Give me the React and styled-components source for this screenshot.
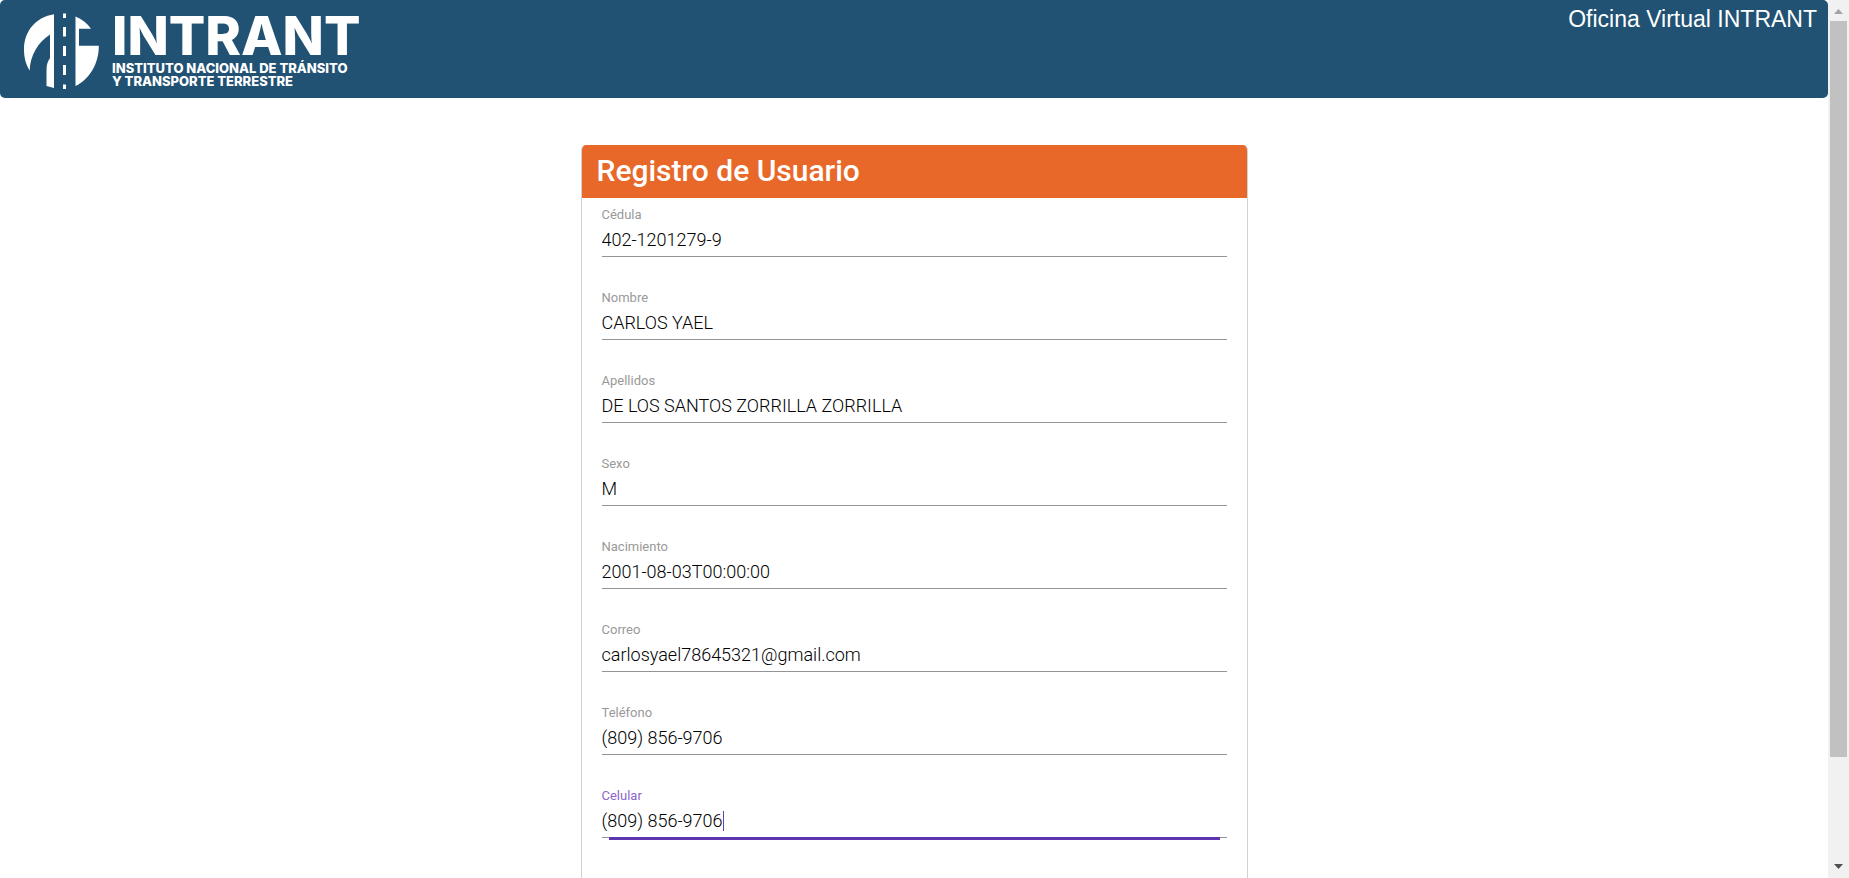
import React from "react";
import styled, { createGlobalStyle } from "styled-components";

const GlobalStyle = createGlobalStyle`
  *, *::before, *::after { box-sizing: border-box; }
  body { margin: 0; background: #fff; font-family: Roboto, "Liberation Sans", sans-serif; color: #212121; }
`;

const Shell = styled.div`
  display: flex;
  height: 100vh;
`;

const Page = styled.div`
  flex: 1;
  min-width: 0;
  overflow-y: auto;
  scrollbar-width: none;
`;

const TopBar = styled.header`
  display: flex;
  justify-content: space-between;
  align-items: flex-start;
  min-height: 98px;
  padding: 0 11px 0 20px;
  border-radius: 5px;
  background: #215273;
  color: #fff;
`;

const Brand = styled.a`
  display: flex;
  gap: 10px;
  padding-top: 10px;
  color: inherit;
  text-decoration: none;
  font-family: Inter, "Liberation Sans", sans-serif;
  font-weight: 800;
`;

const BrandText = styled.span`
  display: flex;
  flex-direction: column;
  white-space: nowrap;
`;

const BrandName = styled.span`
  font-size: 54px;
  line-height: 52px;
`;

const BrandLine = styled.span`
  font-size: 13px;
  line-height: 13px;
`;

const OfficeName = styled.span`
  font-family: "Liberation Sans", sans-serif;
  font-size: 23px;
  line-height: 38px;
`;

const Main = styled.main`
  display: flex;
  justify-content: center;
  padding: 47px 15px;
`;

const Card = styled.section`
  width: 100%;
  max-width: 667px;
  border: 1px solid #d2d2d2;
  border-top: 0;
  border-radius: 5px;
  overflow: hidden;
`;

const CardTitle = styled.h1`
  margin: 0;
  padding: 3px 15px 5px;
  background: #e86829;
  color: #fff;
  font-size: 30px;
  line-height: 45px;
  font-weight: 500;
`;

const Form = styled.form`
  display: flex;
  flex-direction: column;
  gap: 33px;
  padding: 9px 20px 110px;
`;

const Field = styled.div`
  position: relative;
  display: flex;
  flex-direction: column;
  height: 50px;
  border-bottom: 1px solid #949494;
`;

const Label = styled.label`
  font-size: 13px;
  line-height: 16px;
  color: ${({ $active }) => ($active ? "#8c66c9" : "#999")};
`;

const InputRow = styled.div`
  display: flex;
  align-items: center;
  padding-top: 7px;
`;

const Input = styled.input`
  flex: ${({ $active }) => ($active ? "none" : "1")};
  field-sizing: ${({ $active }) => ($active ? "content" : "fixed")};
  min-width: 0;
  padding: 0;
  border: 0;
  outline: 0;
  background: transparent;
  color: #000;
  font-family: inherit;
  font-size: 18px;
  font-weight: 300;
  line-height: 20px;
  height: 20px;
`;

const Caret = styled.span`
  width: 1px;
  height: 20px;
  background: #673ab7;
`;

const Ripple = styled.span`
  position: absolute;
  left: 7px;
  right: 7px;
  bottom: -3px;
  height: 3px;
  background: #5e35b1;
`;

const ScrollTrack = styled.div`
  display: flex;
  flex-direction: column;
  align-items: center;
  width: 21px;
  background: #f1f1f1;
`;

const ScrollArrow = styled.svg`
  display: block;
  flex: none;
  width: 21px;
  height: 21px;
  fill: ${({ $dim }) => ($dim ? "#a3a3a3" : "#505050")};
`;

const ScrollLane = styled.div`
  flex: 1;
  width: 17px;
`;

const ScrollThumb = styled.div`
  height: 88%;
  background: #c1c1c1;
`;

const fields = [
  { id: "cedula", label: "Cédula", value: "402-1201279-9" },
  { id: "nombre", label: "Nombre", value: "CARLOS YAEL" },
  { id: "apellidos", label: "Apellidos", value: "DE LOS SANTOS ZORRILLA ZORRILLA" },
  { id: "sexo", label: "Sexo", value: "M" },
  { id: "nacimiento", label: "Nacimiento", value: "2001-08-03T00:00:00" },
  { id: "correo", label: "Correo", value: "carlosyael78645321@gmail.com" },
  { id: "telefono", label: "Teléfono", value: "(809) 856-9706" },
  { id: "celular", label: "Celular", value: "(809) 856-9706", active: true },
];

function LogoMark() {
  return (
    <svg width="82" height="80" viewBox="20 10 82 80" fill="#fff" aria-hidden="true">
      <path d="M54 14.3C36 17 24 31 24 49.500C24 57.500 26 65 29.700 70.500C30.200 55 38 42.500 50 34.500V58C47.500 61.500 46.500 65 46.500 70V86L54 88Z" />
      <path d="M75.500 16.500C82 19 87 23 91 28.700H79V45.700H98.800C99 63 90 79 75.500 86Z" />
      <path d="M63 13.500H66V18H63ZM63 27H66V36.500H63ZM63 46H66V56H63ZM63 65H66V75H63ZM63 84.500H66V89H63Z" />
    </svg>
  );
}

function TextField({ id, label, value, active }) {
  return (
    <Field>
      <Label htmlFor={id} $active={active}>{label}</Label>
      <InputRow>
        <Input id={id} name={id} type="text" defaultValue={value} $active={active} />
        {active && <Caret />}
      </InputRow>
      {active && <Ripple />}
    </Field>
  );
}

export default function App() {
  return (
    <Shell>
      <GlobalStyle />
      <Page>
        <TopBar>
          <Brand href="#">
            <LogoMark />
            <BrandText>
              <BrandName>INTRANT</BrandName>
              <BrandLine>INSTITUTO NACIONAL DE TRÁNSITO</BrandLine>
              <BrandLine>Y TRANSPORTE TERRESTRE</BrandLine>
            </BrandText>
          </Brand>
          <OfficeName>Oficina Virtual INTRANT</OfficeName>
        </TopBar>
        <Main>
          <Card>
            <CardTitle>Registro de Usuario</CardTitle>
            <Form>
              {fields.map((field) => (
                <TextField key={field.id} {...field} />
              ))}
            </Form>
          </Card>
        </Main>
      </Page>
      <ScrollTrack aria-hidden="true">
        <ScrollArrow $dim viewBox="0 0 21 21"><path d="M6 14L10.500 9L15 14Z" /></ScrollArrow>
        <ScrollLane>
          <ScrollThumb />
        </ScrollLane>
        <ScrollArrow viewBox="0 0 21 21"><path d="M6 7L10.500 12L15 7Z" /></ScrollArrow>
      </ScrollTrack>
    </Shell>
  );
}
